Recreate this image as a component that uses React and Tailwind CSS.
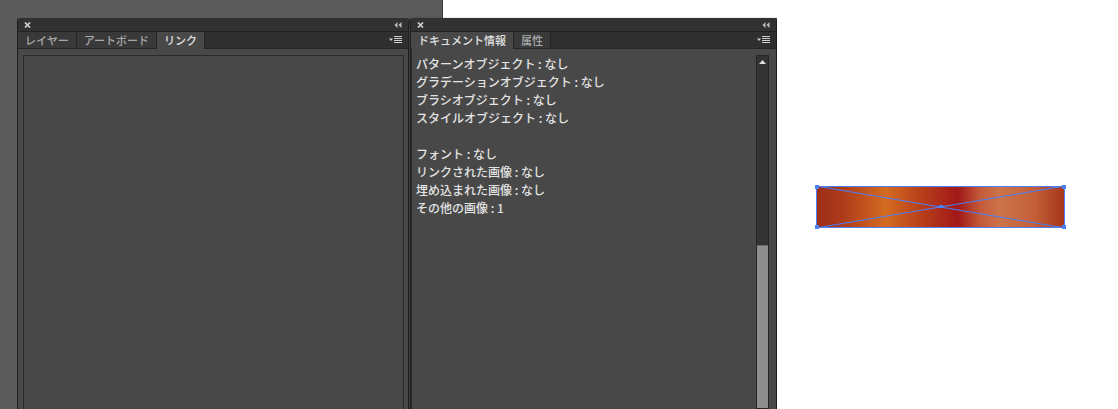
import React from 'react';

const jp = "font-['Lucida_Grande','Noto_Sans_CJK_JP',sans-serif]";

function CloseIcon() {
  return (
    <svg width="7" height="6" viewBox="0 0 7 6" className="block">
      <path d="M1 0.5 L6 5.5 M6 0.5 L1 5.5" stroke="#d6d6d6" strokeWidth="1.6" />
    </svg>
  );
}

function CollapseIcon() {
  return (
    <svg width="8" height="6" viewBox="0 0 8 6" className="block">
      <path d="M3.5 0 L0.5 3 L3.5 6 Z M7.5 0 L4.5 3 L7.5 6 Z" fill="#bdbdbd" />
    </svg>
  );
}

function MenuIcon() {
  return (
    <svg width="13" height="8" viewBox="0 0 13 8" className="block">
      <path d="M0 2.5 L4 2.5 L2 5 Z" fill="#cfcfcf" />
      <path d="M5 0.5 H13 M5 2.5 H13 M5 4.5 H13 M5 6.5 H13" stroke="#cfcfcf" strokeWidth="1" />
    </svg>
  );
}

function TitleBar() {
  return (
    <div className="h-[14px] bg-[#313131] border-b border-[#222] flex items-center justify-between pl-[6px] pr-[6px] rounded-t-[3px]">
      <CloseIcon />
      <CollapseIcon />
    </div>
  );
}

function Tabs({ tabs, active }) {
  return (
    <div className="h-[17px] bg-[#2f2f2f] flex items-stretch border-b border-[#262626]">
      {tabs.map((t, i) => (
        <div
          key={t}
          className={
            i === active
              ? 'px-[7px] flex items-center bg-[#484848] text-[#e2e2e2] text-[11px] font-medium border-r border-[#262626] -mb-px'
              : 'px-[7px] flex items-center bg-[#393939] text-[#a9a9a9] text-[11px] font-medium border-r border-[#262626]'
          }
        >
          {t}
        </div>
      ))}
      <div className="flex-1" />
      <div className="flex items-center pr-[6px]">
        <MenuIcon />
      </div>
    </div>
  );
}

const info = [
  'パターンオブジェクト : なし',
  'グラデーションオブジェクト : なし',
  'ブラシオブジェクト : なし',
  'スタイルオブジェクト : なし',
  '',
  'フォント : なし',
  'リンクされた画像 : なし',
  '埋め込まれた画像 : なし',
  'その他の画像 : 1',
];

function Artwork() {
  return (
    <svg width="251" height="44" viewBox="0 0 251 44" className="block">
      <defs>
        <linearGradient id="g" x1="0" x2="1" y1="0" y2="0">
          <stop offset="0" stopColor="#9c2e17" />
          <stop offset="0.1" stopColor="#ac3a1a" />
          <stop offset="0.28" stopColor="#d46b21" />
          <stop offset="0.42" stopColor="#b8401a" />
          <stop offset="0.57" stopColor="#a11818" />
          <stop offset="0.66" stopColor="#c45a3a" />
          <stop offset="0.74" stopColor="#cd744a" />
          <stop offset="0.88" stopColor="#c25e38" />
          <stop offset="1" stopColor="#a43418" />
        </linearGradient>
      </defs>
      <rect x="1" y="1" width="249" height="42" fill="url(#g)" />
      <rect x="1.5" y="1.5" width="248" height="41" fill="none" stroke="#4a7ff5" strokeWidth="1" />
      <path d="M1 1 L250 43 M1 43 L250 1" stroke="#4a7ff5" strokeWidth="1" />
      <rect x="0" y="0" width="4" height="4" fill="#4a7ff5" />
      <rect x="247" y="0" width="4" height="4" fill="#4a7ff5" />
      <rect x="0" y="40" width="4" height="4" fill="#4a7ff5" />
      <rect x="247" y="40" width="4" height="4" fill="#4a7ff5" />
      <rect x="124" y="20" width="4" height="3" fill="#4a7ff5" />
    </svg>
  );
}

export default function App() {
  return (
    <div className={`w-[1118px] h-[409px] overflow-hidden flex flex-col bg-white ${jp}`}>
      <div className="h-[18px] flex shrink-0">
        <div className="w-[443px] bg-[#5b5b5b] border-r border-[#3a3a3a]" />
        <div className="flex-1 bg-white" />
      </div>
      <div className="flex flex-1 min-h-0">
        <div className="w-[17px] bg-[#5b5b5b]" />
        {/* layers / artboards / links panel */}
        <div className="w-[392px] bg-[#5b5b5b] flex">
          <div className="flex-1 flex flex-col border-x border-[#1f1f1f] rounded-t-[3px] bg-[#484848]">
            <TitleBar />
            <Tabs tabs={['レイヤー', 'アートボード', 'リンク']} active={2} />
            <div className="flex-1 pl-[5px] pr-[4px] pt-[6px]">
              <div className="h-full border border-b-0 border-[#2a2a2a]" />
            </div>
          </div>
        </div>
        <div className="w-px bg-[#3d3d3d]" />
        {/* document info / attributes panel */}
        <div className="w-[367px] bg-[#5b5b5b] flex">
          <div className="flex-1 flex flex-col border-x border-[#1f1f1f] rounded-t-[3px] bg-[#484848] shadow-[1px_0_2px_rgba(0,0,0,0.25)]">
            <TitleBar />
            <Tabs tabs={['ドキュメント情報', '属性']} active={0} />
            <div className="flex-1 flex pt-[6px] pr-[7px] pl-[4px] border-l border-[#2c2c2c]">
              <div className="flex-1 text-[12px] leading-[18px] text-[#e4e4e4] font-medium">
                {info.map((line, i) => (
                  <div key={i} className="h-[18px] whitespace-pre">{line}</div>
                ))}
              </div>
              <div className="w-[13px] flex flex-col bg-[#333] border border-[#262626]">
                <div className="h-[12px] flex items-center justify-center">
                  <svg width="7" height="4" viewBox="0 0 7 4" className="block">
                    <path d="M0 4 L3.5 0 L7 4 Z" fill="#e0e0e0" />
                  </svg>
                </div>
                <div className="h-[177px]" />
                <div className="flex-1 bg-[#8e8e8e] border-t border-[#6a6a6a]" />
              </div>
            </div>
          </div>
        </div>
        <div className="flex-1 bg-white pl-[38px] pt-[167px]">
          <Artwork />
        </div>
      </div>
    </div>
  );
}
